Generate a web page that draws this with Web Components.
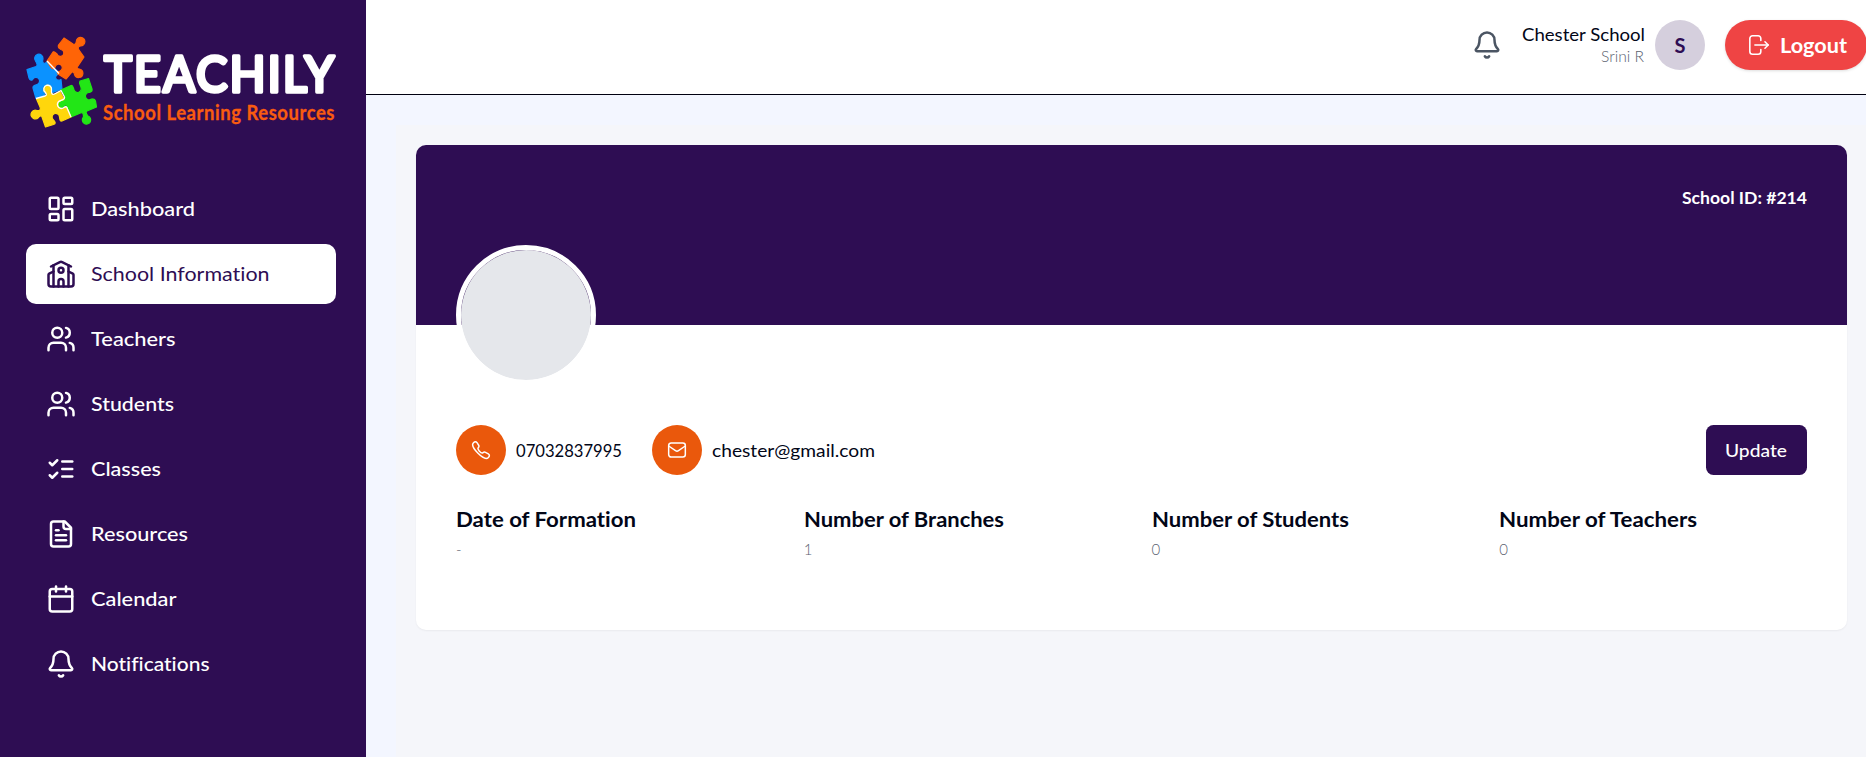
<!DOCTYPE html>
<html lang="en">
<head>
<meta charset="utf-8">
<title>Teachily - School Information</title>
<style>
html,body{margin:0;height:100%}
body{font-family:Lato,"Open Sans",sans-serif;font-variant-ligatures:none;color:#020617;overflow:hidden;background:#f5f7fb}
</style>
</head>
<body>
<school-app></school-app>
<script>
const define=(name,html,setup)=>customElements.define(name,class extends HTMLElement{
  connectedCallback(){
    if(this.shadowRoot)return;
    const t=document.createElement('template');
    t.innerHTML=typeof html==='function'?html(this):html;
    this.attachShadow({mode:'open'}).append(t.content.cloneNode(true));
    if(setup)setup(this);
  }
});

/* A single line of text, set to the advance width given in "w". */
define('fit-text',`<style>:host{display:inline-block;white-space:nowrap}span{display:inline-block;transform-origin:0 50%}</style><span><slot></slot></span>`,el=>{
  const s=el.shadowRoot.querySelector('span'),w=+el.getAttribute('w');
  const n=s.getBoundingClientRect().width;
  el.style.width=w+'px';
  if(n)s.style.transform=`scaleX(${w/n})`;
});

const icons={
  dashboard:'<rect x="3" y="3" width="7" height="9" rx="1"/><rect x="14" y="3" width="7" height="5" rx="1"/><rect x="14" y="12" width="7" height="9" rx="1"/><rect x="3" y="16" width="7" height="5" rx="1"/>',
  school:'<path d="M14 22v-4a2 2 0 1 0-4 0v4"/><path d="m18 10 3.447 1.724a1 1 0 0 1 .553.894V20a2 2 0 0 1-2 2H4a2 2 0 0 1-2-2v-7.382a1 1 0 0 1 .553-.894L6 10"/><path d="M18 5v17"/><path d="m4 6 7.106-3.553a2 2 0 0 1 1.788 0L20 6"/><path d="M6 5v17"/><circle cx="12" cy="9" r="2"/>',
  users:'<path d="M16 21v-2a4 4 0 0 0-4-4H6a4 4 0 0 0-4 4v2"/><circle cx="9" cy="7" r="4"/><path d="M22 21v-2a4 4 0 0 0-3-3.87"/><path d="M16 3.13a4 4 0 0 1 0 7.75"/>',
  checks:'<path d="m3 17 2 2 4-4"/><path d="m3 7 2 2 4-4"/><path d="M13 6h8"/><path d="M13 12h8"/><path d="M13 18h8"/>',
  file:'<path d="M15 2H6a2 2 0 0 0-2 2v16a2 2 0 0 0 2 2h12a2 2 0 0 0 2-2V7Z"/><path d="M14 2v4a2 2 0 0 0 2 2h4"/><path d="M10 9H8"/><path d="M16 13H8"/><path d="M16 17H8"/>',
  calendar:'<path d="M8 2v4"/><path d="M16 2v4"/><rect width="18" height="18" x="3" y="4" rx="2"/><path d="M3 10h18"/>',
  bell:'<path d="M10.268 21a2 2 0 0 0 3.464 0"/><path d="M3.262 15.326A1 1 0 0 0 4 17h16a1 1 0 0 0 .74-1.673C19.41 13.956 18 12.499 18 8A6 6 0 0 0 6 8c0 4.499-1.411 5.956-2.738 7.326"/>',
  logout:'<path d="M14 7V5a3 3 0 0 0-3-3H5a3 3 0 0 0-3 3v14a3 3 0 0 0 3 3h6a3 3 0 0 0 3-3v-2"/><path d="M7.5 12H22"/><path d="m18.5 8.5 3.5 3.5-3.5 3.5"/>',
  phone:'<path d="M3 3.2C4.500 1.700 6.200 1.700 7.200 3.200L9.200 6.300C9.900 7.400 9.600 8.400 8.700 9.300C7.900 10.100 8.300 11.200 9.900 13.200C11.700 15.300 13.200 16.100 14.100 15.500C15.400 14.400 16.300 14.200 17.400 14.800L20.800 16.700C22.500 17.700 22.400 19.300 20.900 20.900C18.300 23.500 13.300 20.900 8.400 16C3.400 11 0.400 5.800 3 3.200Z"/>',
  mail:'<rect x="2" y="3.500" width="20" height="17" rx="3"/><path d="m2.500 7.500 7.700 5.300a3.200 3.200 0 0 0 3.600 0l7.700-5.300"/>'
};
define('line-icon',el=>{
  const s=el.getAttribute('size')||30,k=el.getAttribute('stroke')||2;
  return `<style>:host{display:block;flex:none;width:${s}px;height:${s}px}svg{display:block}</style>
  <svg width="${s}" height="${s}" viewBox="0 0 24 24" fill="none" stroke="currentColor" stroke-width="${k}" stroke-linecap="round" stroke-linejoin="round">${icons[el.getAttribute('name')]}</svg>`;
});

define('brand-logo',`<style>:host{display:block;height:150px;width:366px}svg{display:block}text{font-family:Lato,sans-serif}</style>
<svg width="366" height="150" viewBox="0 0 366 150">
  <g stroke-linejoin="round" stroke-width="1.200">
  <path fill="#0b92ff" stroke="#0b92ff" d="M27 69.500L36 66.500C38 65.500 37 63.500 35.500 61A4.200 4.200 0 1 1 43 58.800C42 62 43 64 45.500 63L47.500 61.500L59 73C58 74.500 56 75 55.500 77C55.500 80 59 81 61 79.500L62 89L49 94C47 94 50.500 89.500 47 87.500C43 86 41.500 89 44 92.500C45.500 94.500 44 95.500 42 96.500L36 98.500L33 88C32.500 86 34 85.500 37 84.500A3.600 3.600 0 1 0 33 79C32 81 30 80.500 29 78Z"/>
  <path fill="#ff6407" stroke="#ff6407" d="M64 38L73 44C75 45 76 43.500 76.300 41.500A4.300 4.300 0 1 1 80.500 46C78 46.500 77.500 48 79 50L84 57L78 66C76.500 68 77 69 79.500 69A4.300 4.300 0 1 1 74.500 74.500C74 71.500 72.500 71.500 71 73L66 79L58 74C56.500 72 58 71.500 60 71A3.600 3.600 0 1 0 55.500 66C55 68 53 70 51 67.500L47 61L53 52C54 51 55 52 57 54A3.500 3.500 0 1 0 61 49.500C59 48.500 57.500 48 58.500 45Z"/>
  <path fill="#22e616" stroke="#22e616" d="M61 90L71 85.500C73 85 73 87 74 90A3.700 3.700 0 1 0 81 87.500C80.500 84.500 78.500 83.500 80 81L88.500 78.500L92 89C92.500 91 91.500 92 89.500 92.500A3.700 3.700 0 1 0 91.500 99C93.500 99 95 98.500 95.500 101L96.500 107L87 111C85.500 112 86 113.500 88 116A4.200 4.200 0 1 1 83.500 117C83.500 113.500 83 112 80.500 113L71 117L67 106C66.500 104 65 105 63 107A4.300 4.300 0 1 1 62.500 99.500C65 99.500 65.500 97.500 64.500 95Z"/>
  <path fill="#ffd60c" stroke="#ffd60c" d="M36.500 99L45 96.500C47.500 96 47 94 45 92A3.900 3.900 0 1 1 51.500 90C51 93.500 52 95 54.500 94L60 91.500L64 99C64 101 62 99.500 60 101A4 4 0 1 0 64 108C66 106 67 107 67.500 109L71 117L62 121C59.500 121.500 60 119 59.500 117A3.700 3.700 0 1 0 53.500 120C55.500 122 56 124 53.500 124.500L45.500 127L42 117C41.500 115 39.500 116 38.500 117.500A4.300 4.300 0 1 1 37 110.500C40 111 41 109.500 40 107Z"/>
  <g fill="none" stroke="#fff" stroke-width="1.300"><path d="M47 61L59 73.500"/><path d="M36 98.500L45 96C47 95.500 46.500 94 45 92A3.900 3.900 0 1 1 51.500 90C51 93.500 52 95 54.500 94L61 90.500L64.500 97C65 99.500 63 99.500 61 100.500A4 4 0 1 0 64 107.500C66 106 67 107 67.500 109L71 117"/></g>
  </g>
  <text x="104" y="91.500" font-size="51" font-weight="500" fill="#fff" stroke="#fff" stroke-width="3.600" stroke-linecap="round" stroke-linejoin="round" letter-spacing="2" textLength="232" lengthAdjust="spacingAndGlyphs">TEACHILY</text>
  <text x="103" y="120" font-size="20.500" font-weight="700" fill="#f95c10" stroke="#f95c10" stroke-width=".3" stroke-linejoin="round" letter-spacing=".6" textLength="232" lengthAdjust="spacingAndGlyphs">School Learning Resources</text>
</svg>`);

define('nav-item',el=>`<style>
:host{display:flex;align-items:center;gap:15px;height:60px;padding:0 20px;box-sizing:border-box;border-radius:10px;color:#fff;font-size:20px;font-weight:500;line-height:28px}
:host([active]){background:#fff;color:#2e0d53;font-weight:400}
fit-text{margin-bottom:2px}
</style><line-icon name="${el.getAttribute('icon')}"></line-icon><fit-text w="${el.getAttribute('w')}">${el.getAttribute('label')}</fit-text>`);

define('side-bar',`<style>
:host{display:block;width:366px;flex:none;background:#2e0d53}
nav{display:flex;flex-direction:column;gap:5px;padding:29px 30px 0 26px}
</style><brand-logo></brand-logo><nav>
<nav-item icon="dashboard" label="Dashboard" w="104"></nav-item>
<nav-item active icon="school" label="School Information" w="178.500"></nav-item>
<nav-item icon="users" label="Teachers" w="84.500"></nav-item>
<nav-item icon="users" label="Students" w="83"></nav-item>
<nav-item icon="checks" label="Classes" w="70"></nav-item>
<nav-item icon="file" label="Resources" w="97"></nav-item>
<nav-item icon="calendar" label="Calendar" w="85.500"></nav-item>
<nav-item icon="bell" label="Notifications" w="118.500"></nav-item></nav>`);

define('top-bar',`<style>
:host{display:flex;justify-content:flex-end;align-items:flex-start;height:95px;box-sizing:border-box;padding-top:20px;background:#fff;border-bottom:1px solid #000010}
line-icon.b{color:#4b5563;margin:10px 20px 0 0}
.who{display:flex;flex-direction:column;align-items:flex-end;margin-right:10px;padding-top:2px}
.n{font-size:17.500px;line-height:25px;font-weight:400;height:25px}
.r{font-size:15px;line-height:20px;font-weight:300;color:#5b6270;height:20px;margin-top:-1px;margin-right:1px}
.av{width:50px;height:50px;border-radius:50%;background:#d5cfdd;color:#2e0d53;font-weight:700;font-size:20px;line-height:50px;text-align:center;margin-right:20px}
.out{display:flex;align-items:center;gap:10px;width:142px;height:50px;box-sizing:border-box;padding-left:23px;border-radius:25px;background:#ef4444;color:#fff;font-size:20px;font-weight:700;margin-right:-1px;box-shadow:0 1px 3px #0002}
</style><line-icon class="b" name="bell"></line-icon>
<div class="who"><fit-text class="n" w="123">Chester School</fit-text><fit-text class="r" w="43">Srini R</fit-text></div>
<div class="av">S</div><div class="out"><line-icon name="logout" size="22" stroke="1.700"></line-icon><fit-text w="67">Logout</fit-text></div>`);

define('contact-item',el=>`<style>
:host{display:flex;align-items:center;gap:10px;font-size:17.500px;line-height:25px;font-weight:400}
i{display:flex;align-items:center;justify-content:center;width:50px;height:50px;border-radius:50%;background:#ea580c;color:#fff}
</style><i><line-icon name="${el.getAttribute('icon')}" size="20" stroke="1.800"></line-icon></i><fit-text w="${el.getAttribute('w')}"><slot></slot></fit-text>`);

define('stat-item',el=>`<style>
:host{display:flex;flex-direction:column;align-items:flex-start}
.l{font-size:20px;line-height:30px;font-weight:700;height:30px;margin-top:-1px}
.v{font-size:15px;line-height:20px;font-weight:300;color:#5b6270;margin-top:5px}
</style><fit-text class="l" w="${el.getAttribute('w')}">${el.getAttribute('label')}</fit-text><div class="v"><slot></slot></div>`);

define('school-card',`<style>
:host{display:block;height:485px;background:#fff;border-radius:10px;box-shadow:0 1px 2px #0000000d}
.hero{position:relative;height:180px;box-sizing:border-box;border-radius:10px 10px 0 0;background:#2e0d53;color:#fff;padding:40px 40px 0;display:flex;justify-content:flex-end;font-size:17.500px;line-height:25px;font-weight:700}
.pic{position:absolute;left:40px;top:100px;width:140px;height:140px;box-sizing:border-box;border:5px solid #fff;border-radius:50%;background:#e5e7eb padding-box}
.row{display:flex;align-items:center;gap:30px;padding:100px 40px 0}
button{display:flex;align-items:center;margin-left:auto;width:101px;height:50px;border:0;border-radius:7.500px;background:#2e0d53;color:#fff;font:500 17.500px/25px Lato,sans-serif;padding:0}
button fit-text{margin-left:18.500px;text-align:left}
.grid{display:grid;grid-template-columns:repeat(4,1fr);gap:40px;padding:30px 40px 0}
</style><div class="hero"><fit-text w="125">School ID: #214</fit-text><div class="pic"></div></div>
<div class="row"><contact-item icon="phone" w="106">07032837995</contact-item><contact-item icon="mail" w="163">chester@gmail.com</contact-item><button><fit-text w="62">Update</fit-text></button></div>
<div class="grid"><stat-item label="Date of Formation" w="180">-</stat-item><stat-item label="Number of Branches" w="200">1</stat-item><stat-item label="Number of Students" w="197">0</stat-item><stat-item label="Number of Teachers" w="198">0</stat-item></div>`);

define('school-app',`<style>
:host{display:flex;height:757px;overflow:hidden}
.col{flex:1;min-width:0;display:flex;flex-direction:column;background:#f3f6ff}
main{flex:1;margin:30px 0 0 30px;padding:20px 19px 0 20px;background:#f5f6fa}
</style><side-bar></side-bar><div class="col"><top-bar></top-bar><main><school-card></school-card></main></div>`);
</script>
</body>
</html>
